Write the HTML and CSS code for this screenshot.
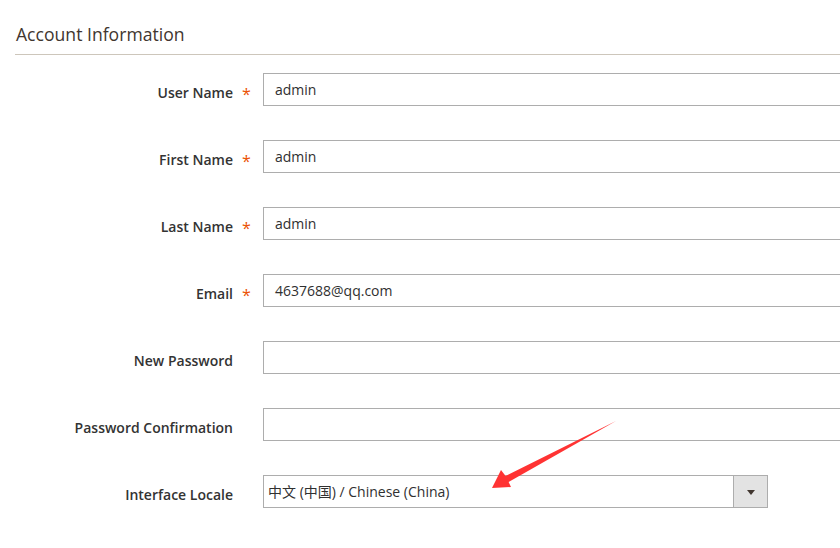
FILE: index.html
```html
<!DOCTYPE html>
<html>
<head>
<meta charset="utf-8">
<link rel="stylesheet" href="styles.css">
</head>
<body>
<div class="page">
  <div class="section-title">Account Information</div>
  <div class="form">
    <div class="field">
      <div class="label">User Name<span class="req">*</span></div>
      <div class="control"><div class="input">admin</div></div>
    </div>
    <div class="field">
      <div class="label">First Name<span class="req">*</span></div>
      <div class="control"><div class="input">admin</div></div>
    </div>
    <div class="field">
      <div class="label">Last Name<span class="req">*</span></div>
      <div class="control"><div class="input">admin</div></div>
    </div>
    <div class="field">
      <div class="label">Email<span class="req">*</span></div>
      <div class="control"><div class="input">4637688@qq.com</div></div>
    </div>
    <div class="field">
      <div class="label">New Password<span class="req blank"></span></div>
      <div class="control"><div class="input"></div></div>
    </div>
    <div class="field">
      <div class="label">Password Confirmation<span class="req blank"></span></div>
      <div class="control"><div class="input"></div></div>
    </div>
    <div class="field">
      <div class="label">Interface Locale<span class="req blank"></span></div>
      <div class="control">
        <div class="select">
          <span class="select-text">中文 (中国) / Chinese (China)</span>
          <span class="select-btn"><span class="caret"></span></span>
        </div>
      </div>
    </div>
  </div>
  <svg class="arrow" width="840" height="548" viewBox="0 0 840 548">
    <polygon points="492,488 501,470 505.6,476 616,421 508.6,482 511,487" fill="#ff3333"/>
  </svg>
</div>
</body>
</html>
```
FILE: styles.css
```css
html, body {
  margin: 0;
  padding: 0;
  background: #ffffff;
  overflow: hidden;
}
.page {
  position: relative;
  width: 840px;
  height: 548px;
  font-family: "Open Sans", "Noto Sans", "Noto Sans CJK SC", sans-serif;
  color: #303030;
}
.section-title {
  margin-left: 15px;
  padding: 22px 0 0 1px;
  height: 32px;
  font-size: 17.6px;
  line-height: 24px;
  color: #41362f;
  border-bottom: 1px solid #cdc6bb;
}
.form {
  padding-top: 18px;
  display: flex;
  flex-direction: column;
  gap: 34px;
}
.field {
  display: flex;
  height: 33px;
}
.label {
  width: 233px;
  flex: none;
  text-align: right;
  font-size: 14px;
  font-weight: 600;
  line-height: 20px;
  padding-top: 10px;
  box-sizing: border-box;
  position: relative;
  color: #333333;
}
.req {
  position: absolute;
  left: 242px;
  top: 11px;
  color: #eb5202;
  font-size: 16px;
  font-weight: 400;
}
.control {
  margin-left: 30px;
  flex: 1;
  min-width: 0;
}
.input {
  height: 33px;
  box-sizing: border-box;
  border: 1px solid #adadad;
  border-right: none;
  padding: 6px 0 0 11px;
  font-size: 14px;
  line-height: 20px;
  color: #303030;
  width: 100%;
}
.select {
  width: 505px;
  height: 33px;
  box-sizing: border-box;
  border: 1px solid #adadad;
  display: flex;
  align-items: stretch;
}
.select-text {
  flex: 1;
  padding: 6px 0 0 4px;
  font-size: 14px;
  line-height: 20px;
  color: #303030;
}
.select-btn {
  width: 33px;
  flex: none;
  background: #e3e3e3;
  border-left: 1px solid #adadad;
  display: flex;
  align-items: center;
  justify-content: center;
}
.caret {
  width: 0;
  height: 0;
  border-left: 4px solid transparent;
  border-right: 4px solid transparent;
  border-top: 5px solid #41362f;
  margin-top: 1px;
}
.arrow {
  position: absolute;
  left: 0;
  top: 0;
  pointer-events: none;
}
```
